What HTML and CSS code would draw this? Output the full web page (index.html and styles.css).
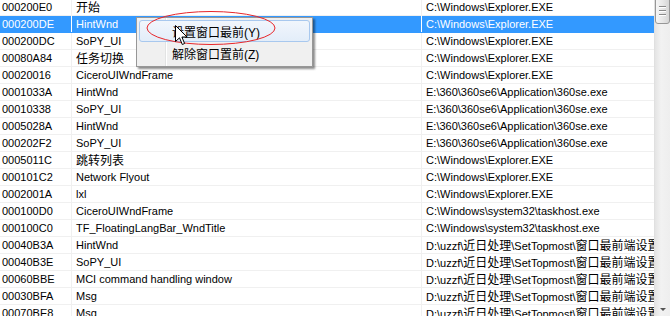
FILE: index.html
```
<!DOCTYPE html>
<html lang="zh">
<head>
  <meta charset="UTF-8" />
  <title>窗口列表</title>
  <link rel="stylesheet" href="styles.css">
</head>
<body>

  <div class="listview">
    <div class="rows">
      <div class="row"><span class="c1">000200E0</span><span class="c2"><span class="zh">开始</span></span><span class="c3">C:\Windows\Explorer.EXE</span></div>
      <div class="row sel"><span class="c1">000200DE</span><span class="c2">HintWnd</span><span class="c3">C:\Windows\Explorer.EXE</span></div>
      <div class="row"><span class="c1">000200DC</span><span class="c2">SoPY_UI</span><span class="c3">C:\Windows\Explorer.EXE</span></div>
      <div class="row"><span class="c1">00080A84</span><span class="c2"><span class="zh">任务切换</span></span><span class="c3">C:\Windows\Explorer.EXE</span></div>
      <div class="row"><span class="c1">00020016</span><span class="c2">CiceroUIWndFrame</span><span class="c3">C:\Windows\Explorer.EXE</span></div>
      <div class="row"><span class="c1">0001033A</span><span class="c2">HintWnd</span><span class="c3">E:\360\360se6\Application\360se.exe</span></div>
      <div class="row"><span class="c1">00010338</span><span class="c2">SoPY_UI</span><span class="c3">E:\360\360se6\Application\360se.exe</span></div>
      <div class="row"><span class="c1">0005028A</span><span class="c2">HintWnd</span><span class="c3">E:\360\360se6\Application\360se.exe</span></div>
      <div class="row"><span class="c1">000202F2</span><span class="c2">SoPY_UI</span><span class="c3">E:\360\360se6\Application\360se.exe</span></div>
      <div class="row"><span class="c1">0005011C</span><span class="c2"><span class="zh">跳转列表</span></span><span class="c3">C:\Windows\Explorer.EXE</span></div>
      <div class="row"><span class="c1">000101C2</span><span class="c2">Network Flyout</span><span class="c3">C:\Windows\Explorer.EXE</span></div>
      <div class="row"><span class="c1">0002001A</span><span class="c2">lxl</span><span class="c3">C:\Windows\Explorer.EXE</span></div>
      <div class="row"><span class="c1">000100D0</span><span class="c2">CiceroUIWndFrame</span><span class="c3">C:\Windows\system32\taskhost.exe</span></div>
      <div class="row"><span class="c1">000100C0</span><span class="c2">TF_FloatingLangBar_WndTitle</span><span class="c3">C:\Windows\system32\taskhost.exe</span></div>
      <div class="row"><span class="c1">00040B3A</span><span class="c2">HintWnd</span><span class="c3">D:\uzzf\<span class="zh">近日处理</span>\SetTopmost\<span class="zh">窗口最前端设置</span></span></div>
      <div class="row"><span class="c1">00040B3E</span><span class="c2">SoPY_UI</span><span class="c3">D:\uzzf\<span class="zh">近日处理</span>\SetTopmost\<span class="zh">窗口最前端设置</span></span></div>
      <div class="row"><span class="c1">00060BBE</span><span class="c2">MCI command handling window</span><span class="c3">D:\uzzf\<span class="zh">近日处理</span>\SetTopmost\<span class="zh">窗口最前端设置</span></span></div>
      <div class="row"><span class="c1">00030BFA</span><span class="c2">Msg</span><span class="c3">D:\uzzf\<span class="zh">近日处理</span>\SetTopmost\<span class="zh">窗口最前端设置</span></span></div>
      <div class="row"><span class="c1">00070BE8</span><span class="c2">Msg</span><span class="c3">D:\uzzf\<span class="zh">近日处理</span>\SetTopmost\<span class="zh">窗口最前端设置</span></span></div>
    </div>
    <div class="scrollbar">
      <div class="thumb">
        <span class="grip"></span>
        <span class="grip"></span>
        <span class="grip"></span>
      </div>
      <div class="track"></div>
      <div class="arrow-down"></div>
    </div>
  </div>

  <!-- 右键菜单 -->
  <div class="menu">
    <div class="item hover"><span class="zh">设置窗口最前</span>(Y)</div>
    <div class="item"><span class="zh">解除窗口置前</span>(Z)</div>
  </div>

  <!-- 红圈标注 + 鼠标 -->
  <svg class="mark" width="134" height="38" viewBox="0 0 134 38">
    <ellipse cx="67" cy="19" rx="64" ry="16.5" fill="none" stroke="#e8262a" stroke-width="1"/>
  </svg>
  <svg class="cursor" width="13" height="21" viewBox="0 0 13 21">
    <path d="M0.5 0.5 L0.5 16.5 L4.5 12.8 L7.3 19.5 L9.6 18.5 L6.9 12 L12 12 Z" fill="#fff" stroke="#000" stroke-width="1" stroke-linejoin="miter"/>
  </svg>

</body>
</html>
```

FILE: styles.css
```
body {
  margin: 0;
  background: #fff;
  font-family: "Liberation Sans", "Noto Sans CJK SC", sans-serif;
  font-size: 11px;
  color: #000;
  overflow: hidden;
  width: 670px;
  height: 316px;
  position: relative;
}
.zh {
  font-family: "Noto Sans CJK SC", sans-serif;
  font-size: 12px;
}
.listview {
  display: flex;
  height: 316px;
}
.rows {
  width: 654px;
  margin-top: -1px;
}
.row {
  display: flex;
  height: 16px;
  line-height: 16px;
  border-bottom: 1px solid #f0f0f0;
  white-space: nowrap;
  overflow: hidden;
}
.row span.c1,
.row span.c2,
.row span.c3 {
  overflow: hidden;
  box-sizing: border-box;
}
.c1 {
  width: 72px;
  padding-left: 2px;
  border-right: 1px solid #f0f0f0;
}
.c2 {
  width: 350px;
  padding-left: 4px;
  border-right: 1px solid #f0f0f0;
}
.c3 {
  flex: 1;
  padding-left: 4px;
}
.row.sel {
  background: #3399ff;
  color: #fff;
  border-bottom-color: #3399ff;
}
.row.sel .c1,
.row.sel .c2 {
  border-right-color: #fff;
}

.scrollbar {
  width: 16px;
  display: flex;
  flex-direction: column;
  background: linear-gradient(to right, #e4e4e4, #f2f2f2 40%, #eeeeee);
  border-left: 1px solid #e0e0e0;
  box-sizing: border-box;
}
.thumb {
  height: 26px;
  margin: -2px 0 0 0;
  border: 1px solid #979797;
  border-radius: 0 0 3px 3px;
  background: linear-gradient(to right, #f6f6f6, #e8e8e8 50%, #d6d6d6);
  display: flex;
  flex-direction: column;
  align-items: center;
  padding-top: 7px;
  box-sizing: border-box;
  gap: 2px;
}
.grip {
  width: 7px;
  height: 1px;
  background: #8a8a8a;
  border-bottom: 1px solid #fff;
}
.track {
  flex: 1;
}
.arrow-down {
  height: 10px;
  display: flex;
  justify-content: center;
}
.arrow-down::before {
  content: "";
  margin-top: 2px;
  border-left: 3px solid transparent;
  border-right: 3px solid transparent;
  border-top: 3px solid #555;
  height: 0;
}

.menu {
  position: absolute;
  left: 136px;
  top: 17px;
  width: 177px;
  height: 50px;
  box-sizing: border-box;
  border: 1px solid #979797;
  background: #f0f0f0 linear-gradient(to right, transparent 28px, #e2e3e3 28px, #e2e3e3 29px, #fff 29px, #fff 30px, transparent 30px);
  box-shadow: 2px 2px 2px rgba(0, 0, 0, 0.45);
  padding: 2px;
}
.item {
  height: 22px;
  line-height: 22px;
  padding-left: 32px;
  box-sizing: border-box;
  font-size: 12px;
  border: 1px solid transparent;
  border-radius: 3px;
}
.item.hover {
  border-color: #a8c8ee;
  background: linear-gradient(to bottom, #f1f6fc, #e3edf9);
}
.mark {
  position: absolute;
  left: 144px;
  top: 9px;
}
.cursor {
  position: absolute;
  left: 175px;
  top: 25px;
}
```
